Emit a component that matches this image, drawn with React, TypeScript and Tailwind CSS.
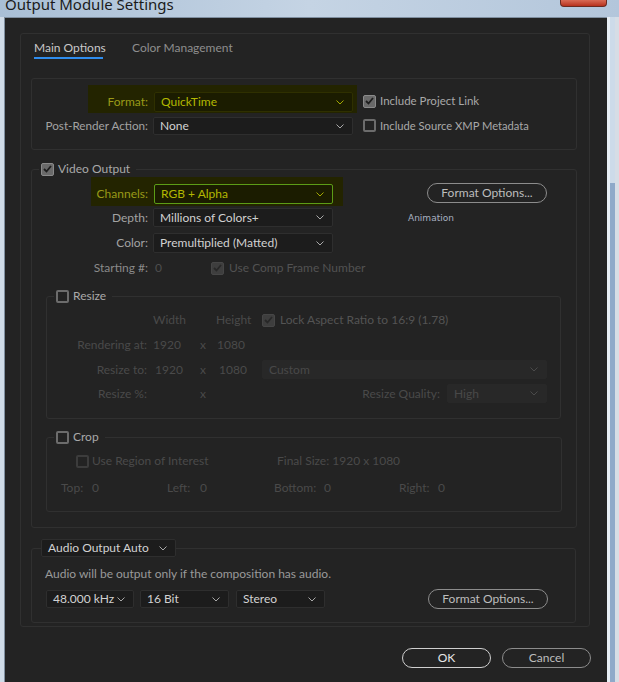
import React from 'react';

const font = { fontFamily: 'Lato, "Noto Sans", sans-serif' };

function Chevron({ color = '#a0a0a0' }: { color?: string }) {
  return (
    <svg width="8" height="5" viewBox="0 0 8 5" className="shrink-0">
      <polyline points="0.5,0.5 4,4 7.5,0.5" fill="none" stroke={color} strokeWidth="1" />
    </svg>
  );
}

interface DropProps {
  value: string;
  w: string;
  h?: string;
  cls?: string;
  text?: string;
  chev?: string;
}

function Drop({ value, w, h = 'h-[19px]', cls = 'bg-[#1c1c1c] border-[#2e2e2e]', text = 'text-[#d2d2d2]', chev = '#a8a8a8' }: DropProps) {
  return (
    <div className={`${w} ${h} ${cls} border rounded-[2px] flex items-center pl-[6px] pr-[8px] shrink-0`}>
      <span className={`flex-1 ${text} leading-none whitespace-nowrap`}>{value}</span>
      <Chevron color={chev} />
    </div>
  );
}

function Check({ checked = false, disabled = false }: { checked?: boolean; disabled?: boolean }) {
  let cls = 'border-2 border-[#6c6c6c]';
  if (checked && !disabled) cls = 'bg-[#6a6a6a] border border-[#8a8a8a]';
  if (checked && disabled) cls = 'bg-[#3e3e3e] border border-[#464646]';
  if (!checked && disabled) cls = 'border-2 border-[#3c3c3c]';
  return (
    <div className={`w-[13px] h-[13px] rounded-[2px] shrink-0 flex items-center justify-center ${cls}`}>
      {checked && (
        <svg width="9" height="8" viewBox="0 0 9 8">
          <polyline points="1,4 3.5,6.5 8,1" fill="none" stroke={disabled ? '#282828' : '#1e1e1e'} strokeWidth="1.8" />
        </svg>
      )}
    </div>
  );
}

function PillButton({ label, w, strong = false }: { label: string; w: string; strong?: boolean }) {
  return (
    <div
      className={`${w} h-[20px] rounded-full border flex items-center justify-center shrink-0 ${
        strong ? 'border-[#cfcfcf] text-[#e6e6e6] border-[1.5px]' : 'border-[#8c8c8c] text-[#bdbdbd]'
      }`}
    >
      {label}
    </div>
  );
}

export default function App() {
  return (
    <div className="w-[619px] h-[682px] overflow-hidden bg-[#bccde0] flex flex-col text-[12px]" style={font}>
      {/* title bar */}
      <div className="h-[17px] shrink-0 flex bg-gradient-to-r from-[#a9bfd6] via-[#c5d4e4] to-[#b3c6db]">
        <span
          className="ml-[5px] mt-[-6px] text-[15px] leading-[20px] text-[#1b1b1b] whitespace-nowrap"
          style={{ fontFamily: '"Noto Sans", "Open Sans", sans-serif' }}
        >
          Output Module Settings
        </span>
        <div className="ml-auto mr-[12px] w-[47px] h-[7px] rounded-b-[4px] border border-t-0 border-[#6b2a20] bg-gradient-to-b from-[#d86a55] to-[#b7301c]" />
      </div>

      <div className="flex flex-1 min-h-0">
        <div className="w-[4px] bg-[#cfdbe8] shrink-0" />

        {/* dark client area */}
        <div className="w-[603px] bg-[#232323] flex flex-col border-l border-t border-[#7f8fa0]">
          <div className="ml-[15px] mt-[15px] w-[570px] border border-[#303030] rounded-[3px] flex flex-col">
            {/* tabs */}
            <div className="flex pt-[6px] pl-[13px]">
              <div className="flex flex-col w-[69px]">
                <span className="leading-[16px] text-[#c9c9c9] whitespace-nowrap">Main Options</span>
                <div className="h-[2px] mt-[1px] bg-[#2f8ced]" />
              </div>
              <span className="ml-[29px] leading-[16px] text-[#8e8e8e] whitespace-nowrap">Color Management</span>
            </div>

            {/* format box */}
            <div className="ml-[10px] mt-[19px] w-[546px] h-[72px] border border-[#303030] rounded-[3px] flex flex-col">
              <div className="flex mt-[6px]">
                <div className="ml-[56px] w-[269px] h-[28px] bg-[#232400] flex items-start pt-[7px] shrink-0">
                  <span className="w-[60px] text-right leading-[20px] text-[#9a9a18]">Format:</span>
                  <Drop
                    value="QuickTime"
                    w="ml-[6px] w-[199px]"
                    h="h-[20px]"
                    cls="bg-[#1b1c00] border-[#2f3000]"
                    text="text-[#b3b800]"
                    chev="#a3a800"
                  />
                </div>
                <div className="ml-[6px] mt-[9px] flex items-center gap-[4px] h-[14px]">
                  <Check checked />
                  <span className="text-[#a9a9a9] whitespace-nowrap text-[11.5px]">Include Project Link</span>
                </div>
              </div>
              <div className="flex items-center mt-[4px]">
                <span className="w-[116px] text-right text-[#a2a2a2] whitespace-nowrap text-[11.7px] shrink-0">Post-Render Action:</span>
                <Drop value="None" w="ml-[5px] w-[200px]" h="h-[18px]" />
                <div className="ml-[10px] flex items-center gap-[4px]">
                  <Check />
                  <span className="text-[#a9a9a9] whitespace-nowrap text-[11.2px]">Include Source XMP Metadata</span>
                </div>
              </div>
            </div>

            {/* video output */}
            <fieldset className="ml-[10px] mt-[12px] w-[546px] border border-[#303030] rounded-[3px] pb-[15px]">
              <legend className="ml-[7px] pl-[2px] pr-[6px]">
                <div className="flex items-center gap-[4px] h-[14px]">
                  <Check checked />
                  <span className="text-[#a9a9a9] whitespace-nowrap">Video Output</span>
                </div>
              </legend>

              <div className="flex">
                <div className="w-[311px] flex flex-col shrink-0">
                  <div className="ml-[59px] mt-[1px] w-[252px] h-[29px] bg-[#232400] flex items-start pt-[7px]">
                    <span className="w-[57px] text-right leading-[20px] text-[#9a9a18]">Channels:</span>
                    <Drop
                      value="RGB + Alpha"
                      w="ml-[6px] w-[179px]"
                      h="h-[20px]"
                      cls="bg-[#1b1c00] border-[#5c9c16]"
                      text="text-[#b3b800]"
                      chev="#a3a800"
                    />
                  </div>
                  <div className="flex items-center mt-[2px]">
                    <span className="w-[116px] text-right text-[#a2a2a2]">Depth:</span>
                    <Drop value="Millions of Colors+" w="ml-[5px] w-[180px]" />
                  </div>
                  <div className="flex items-center mt-[6px]">
                    <span className="w-[116px] text-right text-[#a2a2a2]">Color:</span>
                    <Drop value="Premultiplied (Matted)" w="ml-[5px] w-[180px]" h="h-[20px]" />
                  </div>
                  <div className="flex items-center mt-[7px] h-[16px] whitespace-nowrap">
                    <span className="w-[116px] shrink-0 text-right text-[#8a8a8a]">Starting #:</span>
                    <span className="ml-[7px] w-[56px] shrink-0 text-[#4e4e4e]">0</span>
                    <Check checked disabled />
                    <span className="ml-[5px] shrink-0 text-[#525252]">Use Comp Frame Number</span>
                  </div>
                </div>
                <div className="ml-[65px] flex flex-col">
                  <div className="ml-[19px] mt-[7px]">
                    <PillButton label="Format Options..." w="w-[120px]" />
                  </div>
                  <span
                    className="mt-[9px] leading-[12px] text-[#a7b1c0]"
                    style={{ fontFamily: '"DejaVu Sans", sans-serif', fontSize: '9px' }}
                  >
                    Animation
                  </span>
                </div>
              </div>

              {/* resize */}
              <fieldset className="ml-[14px] mt-[13px] w-[515px] border border-[#303030] rounded-[3px] pb-[15px]">
                <legend className="ml-[7px] pl-[2px] pr-[6px]">
                  <div className="flex items-center gap-[4px] h-[14px]">
                    <Check />
                    <span className="text-[#a9a9a9]">Resize</span>
                  </div>
                </legend>
                <div className="flex items-center h-[16px] mt-[9px] text-[#4a4a4a] whitespace-nowrap">
                  <span className="w-[106px]" />
                  <span className="w-[63px]">Width</span>
                  <span className="w-[46px]">Height</span>
                  <Check checked disabled />
                  <span className="ml-[5px] text-[#545454]">Lock Aspect Ratio to 16:9 (1.78)</span>
                </div>
                <div className="flex items-center h-[16px] mt-[9px] text-[#4a4a4a]">
                  <span className="w-[100px] text-right whitespace-nowrap">Rendering at:</span>
                  <span className="ml-[6px] w-[47px]">1920</span>
                  <span className="w-[17px]">x</span>
                  <span>1080</span>
                </div>
                <div className="flex items-center mt-[7px] text-[#4a4a4a]">
                  <span className="w-[100px] text-right">Resize to:</span>
                  <span className="ml-[8px] w-[45px]">1920</span>
                  <span className="w-[19px]">x</span>
                  <span className="w-[43px]">1080</span>
                  <Drop
                    value="Custom"
                    w="w-[285px]"
                    cls="bg-[#282828] border-[#282828]"
                    text="text-[#484848]"
                    chev="#4a4a4a"
                  />
                </div>
                <div className="flex items-center mt-[5px] text-[#4a4a4a]">
                  <span className="w-[100px] text-right">Resize %:</span>
                  <span className="ml-[53px] w-[40px]">x</span>
                  <span className="w-[207px] text-right pr-[7px] whitespace-nowrap">Resize Quality:</span>
                  <Drop
                    value="High"
                    w="w-[100px]"
                    cls="bg-[#282828] border-[#282828]"
                    text="text-[#484848]"
                    chev="#4a4a4a"
                  />
                </div>
              </fieldset>

              {/* crop */}
              <fieldset className="ml-[14px] mt-[11px] w-[516px] border border-[#303030] rounded-[3px] pb-[15px]">
                <legend className="ml-[7px] pl-[2px] pr-[6px]">
                  <div className="flex items-center gap-[4px] h-[14px]">
                    <Check />
                    <span className="text-[#a9a9a9]">Crop</span>
                  </div>
                </legend>
                <div className="flex items-center h-[16px] mt-[9px] pl-[29px] text-[#4a4a4a]">
                  <Check disabled />
                  <span className="ml-[3px] w-[185px] whitespace-nowrap">Use Region of Interest</span>
                  <span className="whitespace-nowrap">Final Size: 1920 x 1080</span>
                </div>
                <div className="flex items-center h-[16px] mt-[11px] pl-[14px] text-[#4a4a4a] whitespace-nowrap">
                  <span className="w-[31px]">Top:</span>
                  <span className="w-[75px]">0</span>
                  <span className="w-[33px]">Left:</span>
                  <span className="w-[74px]">0</span>
                  <span className="w-[50px]">Bottom:</span>
                  <span className="w-[75px]">0</span>
                  <span className="w-[39px]">Right:</span>
                  <span>0</span>
                </div>
              </fieldset>
            </fieldset>

            {/* audio */}
            <fieldset className="ml-[10px] mt-[11px] mb-[3px] w-[545px] border border-[#303030] rounded-[3px] pb-[13px]">
              <legend className="ml-[9px]">
                <Drop value="Audio Output Auto" w="w-[135px]" h="h-[18px]" />
              </legend>
              <div className="h-[16px] mt-[9px] pl-[13px] flex items-center text-[#9a9a9a] whitespace-nowrap">
                Audio will be output only if the composition has audio.
              </div>
              <div className="flex items-center mt-[7px] pl-[14px]">
                <Drop value="48.000 kHz" w="w-[88px]" h="h-[18px]" />
                <Drop value="16 Bit" w="ml-[6px] w-[89px]" h="h-[18px]" />
                <Drop value="Stereo" w="ml-[7px] w-[89px]" h="h-[18px]" />
                <div className="ml-[103px]">
                  <PillButton label="Format Options..." w="w-[120px]" />
                </div>
              </div>
            </fieldset>
          </div>

          {/* ok / cancel */}
          <div className="w-[586px] flex justify-end gap-[11px] mt-[21px]">
            <PillButton label="OK" w="w-[89px]" strong />
            <PillButton label="Cancel" w="w-[89px]" />
          </div>
        </div>

        {/* right frame */}
        <div className="w-[12px] shrink-0 flex">
          <div className="w-[3px] bg-[#e6edf4]" />
          <div className="w-[5px] flex flex-col">
            <div className="h-[166px] bg-[#cddbe9]" />
            <div className="flex-1 bg-[#8ea9c9]" />
          </div>
          <div className="flex-1 bg-[#d6dde5]" />
        </div>
      </div>
    </div>
  );
}
